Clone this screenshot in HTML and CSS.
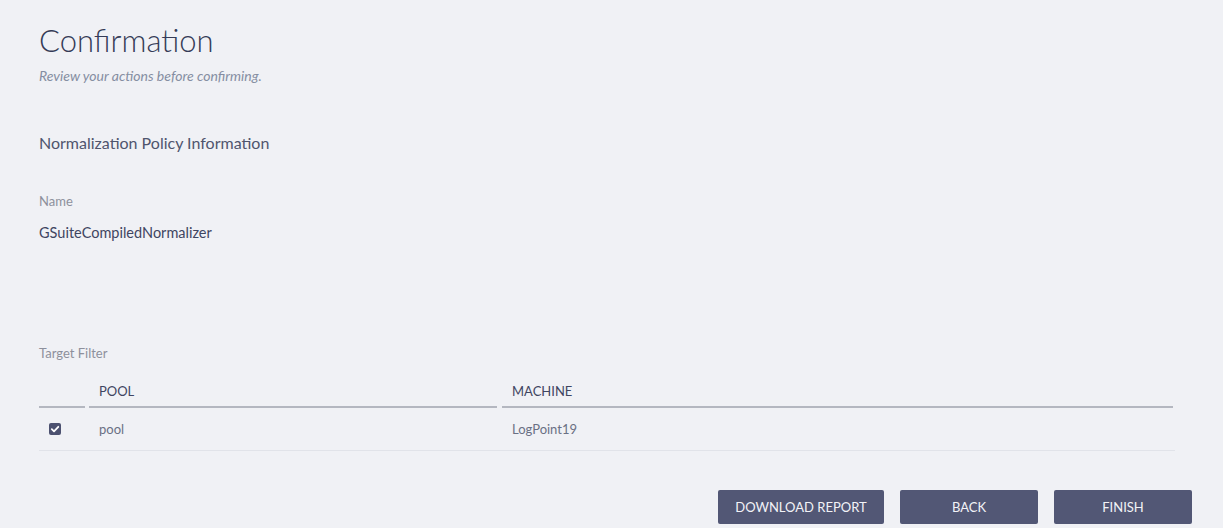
FILE: index.html
```html
<!DOCTYPE html>
<html lang="en">
<head>
    <meta charset="UTF-8">
    <meta name="viewport" content="width=device-width, initial-scale=1.0">
    <title>Confirmation</title>
    <link rel="stylesheet" href="styles.css">
</head>
<body>
    <div class="page">
        <h1 class="title">Confirmation</h1>
        <p class="subtitle">Review your actions before confirming.</p>

        <h2 class="section-title">Normalization Policy Information</h2>

        <div class="field">
            <div class="field-label">Name</div>
            <div class="field-value">GSuiteCompiledNormalizer</div>
        </div>

        <div class="filter">
            <div class="field-label">Target Filter</div>
            <div class="filter-table">
                <div class="th th-check"></div>
                <div class="th th-pool">POOL</div>
                <div class="th th-machine">MACHINE</div>

                <div class="td">
                    <span class="checkbox">
                        <svg viewBox="0 0 12 12" width="12" height="12">
                            <path d="M2.8 6.2 L5 8.3 L9.3 3.8" fill="none" stroke="#fff" stroke-width="1.8" stroke-linecap="round" stroke-linejoin="round"/>
                        </svg>
                    </span>
                </div>
                <div class="td">pool</div>
                <div class="td">LogPoint19</div>
            </div>
        </div>

        <div class="actions">
            <button class="btn btn-report">DOWNLOAD REPORT</button>
            <button class="btn">BACK</button>
            <button class="btn">FINISH</button>
        </div>
    </div>
</body>
</html>
```

FILE: styles.css
```css
html, body {
    margin: 0;
    padding: 0;
    background: #f0f1f5;
}

body {
    font-family: Lato, "Open Sans", sans-serif;
    color: #3c425c;
}

.page {
    padding: 20px 31px 0 39px;
}

.title {
    margin: 0;
    font-size: 31px;
    line-height: 40px;
    font-weight: 300;
    color: #353b57;
}

.subtitle {
    margin: 7px 0 0;
    font-size: 14px;
    line-height: 18px;
    font-style: italic;
    font-weight: 400;
    color: #858ea2;
}

.section-title {
    margin: 48px 0 0;
    font-size: 16px;
    line-height: 20px;
    font-weight: 400;
    color: #4f556d;
}

.field {
    margin-top: 39px;
}

.field-label {
    font-size: 13px;
    line-height: 18px;
    color: #8d909c;
}

.field-value {
    margin-top: 14px;
    font-size: 14.5px;
    line-height: 18px;
    color: #3f4561;
}

.filter {
    margin-top: 102px;
}

.filter-table {
    margin-top: 20px;
    width: 1136px;
    display: grid;
    grid-template-columns: 50px 413px 1fr;
    font-size: 13px;
}

.th {
    padding: 0 0 6px 10px;
    line-height: 18px;
    color: #3f4561;
    border-bottom: 2px solid #b4b7c0;
}

.th-check {
    margin-right: 4px;
}

.th-pool {
    margin-right: 5px;
}

.th-machine {
    margin-right: 2px;
}

.td {
    height: 42px;
    display: flex;
    align-items: center;
    padding-left: 10px;
    color: #6a7084;
    border-bottom: 1px solid #e1e3e9;
}

.checkbox {
    width: 12px;
    height: 12px;
    border-radius: 2px;
    background: #4c5170;
    display: flex;
    align-items: center;
    justify-content: center;
}

.actions {
    margin-top: 39px;
    display: flex;
    justify-content: flex-end;
    gap: 16px;
}

.btn {
    height: 34px;
    width: 138px;
    border: none;
    border-radius: 2px;
    background: #525775;
    color: #f2f3f7;
    font-family: Lato, "Open Sans", sans-serif;
    font-size: 13px;
    cursor: pointer;
}

.btn-report {
    width: 166px;
}
```
